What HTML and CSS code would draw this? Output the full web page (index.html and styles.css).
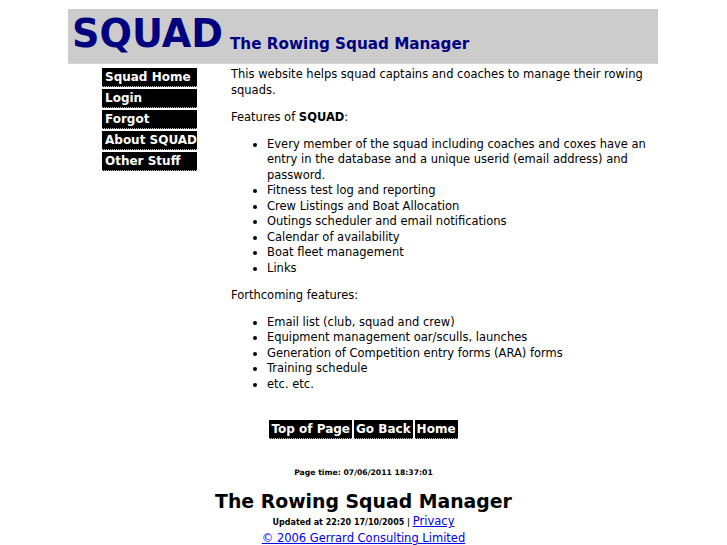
FILE: index.html
```html
<!DOCTYPE html>
<html>
<head>
<meta charset="utf-8">
<title>SQUAD - The Rowing Squad Manager</title>
<link rel="stylesheet" href="styles.css">
</head>
<body>
<div class="page">
  <header class="masthead">
    <div class="logo">SQUAD</div>
    <div class="tagline">The Rowing Squad Manager</div>
  </header>
  <div class="main">
    <nav class="sidebar">
      <a class="nav-item" href="#">Squad Home</a>
      <a class="nav-item" href="#">Login</a>
      <a class="nav-item" href="#">Forgot</a>
      <a class="nav-item" href="#">About SQUAD</a>
      <a class="nav-item" href="#">Other Stuff</a>
    </nav>
    <div class="content">
      <p>This website helps squad captains and coaches to manage their rowing squads.</p>
      <p>Features of <b>SQUAD</b>:</p>
      <ul>
        <li>Every member of the squad including coaches and coxes have an entry in the database and a unique userid (email address) and password.</li>
        <li>Fitness test log and reporting</li>
        <li>Crew Listings and Boat Allocation</li>
        <li>Outings scheduler and email notifications</li>
        <li>Calendar of availability</li>
        <li>Boat fleet management</li>
        <li>Links</li>
      </ul>
      <p>Forthcoming features:</p>
      <ul>
        <li>Email list (club, squad and crew)</li>
        <li>Equipment management oar/sculls, launches</li>
        <li>Generation of Competition entry forms (ARA) forms</li>
        <li>Training schedule</li>
        <li>etc. etc.</li>
      </ul>
    </div>
  </div>
</div>
<div class="buttons">
  <a class="btn" href="#">Top of Page</a><a class="btn" href="#">Go Back</a><a class="btn" href="#">Home</a>
</div>
<footer class="footer">
  <div class="pagetime">Page time: 07/06/2011 18:37:01</div>
  <div class="foot-title">The Rowing Squad Manager</div>
  <div class="updated"><span class="small">Updated at 22:20 17/10/2005 | </span><a href="#">Privacy</a></div>
  <div class="copy"><a href="#">© 2006 Gerrard Consulting Limited</a></div>
</footer>
</body>
</html>
```

FILE: styles.css
```css
html, body {
  margin: 0;
  padding: 0;
  background: #fff;
}
body {
  font-family: "DejaVu Sans", sans-serif;
  font-size: 11.5px;
  line-height: 15.5px;
  color: #000;
  padding-top: 9px;
}
.page {
  width: 590px;
  margin-left: 68px;
}
.masthead {
  display: flex;
  height: 55px;
  background: #cccccc;
  color: #000080;
  box-sizing: border-box;
  border-bottom: 1px dotted #dddddd;
}
.logo {
  width: 162px;
  flex: none;
  box-sizing: border-box;
  padding-left: 4px;
  padding-top: 3px;
  font-size: 38.2px;
  font-weight: bold;
  line-height: normal;
}
.tagline {
  padding-top: 26px;
  font-size: 15.2px;
  font-weight: bold;
  line-height: normal;
}
.main {
  display: flex;
}
.sidebar {
  width: 163px;
  flex: none;
  display: flex;
  flex-direction: column;
  align-items: center;
  gap: 2px;
  padding-top: 4px;
}
.nav-item {
  display: block;
  width: 95px;
  height: 19px;
  box-sizing: border-box;
  padding: 2px 0 0 3px;
  background: #000;
  color: #fff;
  font-size: 12px;
  font-weight: bold;
  text-decoration: none;
  line-height: 15px;
  white-space: nowrap;
  overflow: hidden;
  border-bottom: 1px dotted #bbbbbb;
}
.content {
  flex: 1;
  padding-top: 3px;
}
.content p {
  margin: 11.5px 0;
}
.content p:first-child {
  margin-top: 0;
}
.content ul {
  margin: 11.5px 0;
  padding-left: 36px;
}
.buttons {
  display: flex;
  justify-content: center;
  gap: 2px;
  margin-top: 16px;
}
.btn {
  display: block;
  height: 19px;
  box-sizing: border-box;
  padding: 1px 2px 0;
  background: #000;
  color: #fff;
  font-size: 12px;
  font-weight: bold;
  line-height: 16px;
  text-decoration: none;
  white-space: nowrap;
  border-bottom: 1px dotted #bbbbbb;
}
.footer {
  text-align: center;
  margin-top: 26px;
}
.pagetime {
  font-size: 7.7px;
  font-weight: bold;
}
.small {
  font-size: 8px;
  font-weight: bold;
}
.foot-title {
  font-size: 18.85px;
  font-weight: bold;
  line-height: normal;
  margin-top: 11px;
  margin-bottom: 2px;
}
.copy {
  line-height: 14.5px;
}
.footer a {
  color: #0000ee;
}
```
